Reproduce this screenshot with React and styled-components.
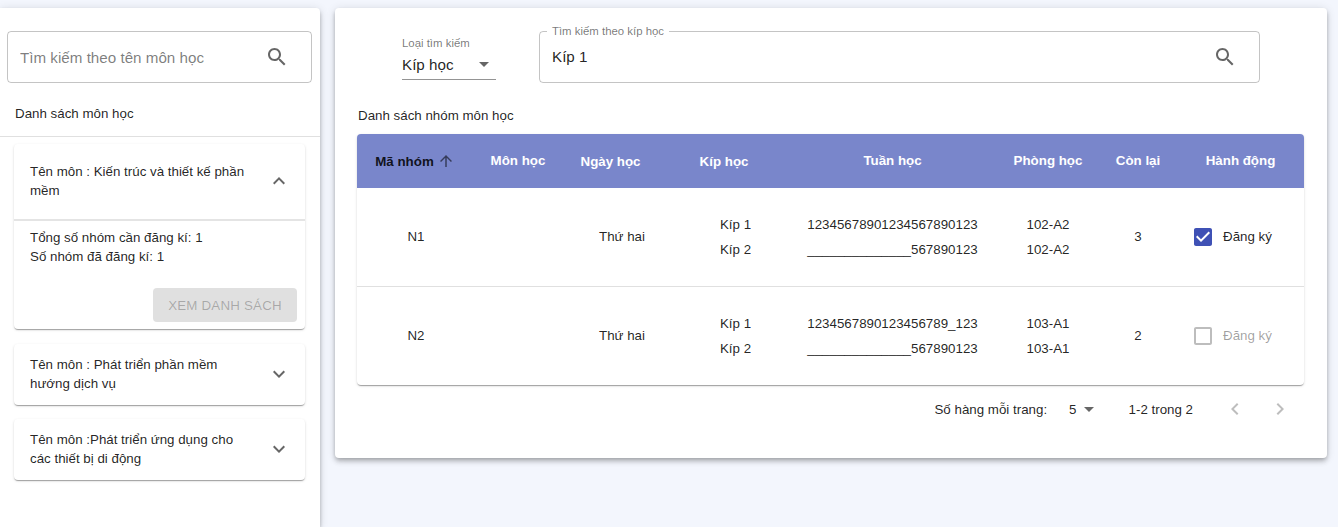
import React from "react";
import styled, { createGlobalStyle } from "styled-components";

const PATHS = {
  search: "M15.5 14h-.79l-.28-.27C15.41 12.59 16 11.11 16 9.5 16 5.91 13.09 3 9.5 3S3 5.91 3 9.5 5.91 16 9.5 16c1.61 0 3.09-.59 4.23-1.57l.27.28v.79l5 4.99L20.49 19l-4.99-5zm-6 0C7.01 14 5 11.99 5 9.5S7.01 5 9.5 5 14 7.01 14 9.5 11.99 14 9.5 14z",
  more: "M16.59 8.59L12 13.17 7.41 8.59 6 10l6 6 6-6z",
  less: "M12 8l-6 6 1.41 1.41L12 10.83l4.59 4.58L18 14z",
  up: "M4 12l1.41 1.41L11 7.83V20h2V7.83l5.58 5.59L20 12l-8-8-8 8z",
  drop: "M7 10l5 5 5-5z",
  checked: "M19 3H5c-1.11 0-2 .9-2 2v14c0 1.1.89 2 2 2h14c1.11 0 2-.9 2-2V5c0-1.1-.89-2-2-2zm-9 14l-5-5 1.41-1.41L10 14.17l7.59-7.59L19 8l-9 9z",
  blank: "M19 5v14H5V5h14m0-2H5c-1.1 0-2 .9-2 2v14c0 1.1.9 2 2 2h14c1.1 0 2-.9 2-2V5c0-1.1-.9-2-2-2z",
  left: "M15.41 7.41L14 6l-6 6 6 6 1.41-1.41L10.83 12z",
  right: "M10 6L8.59 7.41 13.17 12l-4.58 4.59L10 18l6-6z",
};

const FONT = `"Liberation Sans", Arial, sans-serif`;

const Global = createGlobalStyle`
  html, body { margin: 0; padding: 0; height: 100%; overflow: hidden; }
  body {
    background: #f3f6fd;
    font-family: ${FONT};
    font-size: 13.33px;
    color: rgba(0,0,0,.87);
  }
`;

const Svg = styled.svg`
  display: block;
  flex: none;
  width: ${(p) => p.$size || 24}px;
  height: ${(p) => p.$size || 24}px;
  fill: ${(p) => p.$color || "rgba(0,0,0,.6)"};
`;
const Icon = ({ name, size, color }) => (
  <Svg viewBox="0 0 24 24" $size={size} $color={color}><path d={PATHS[name]} /></Svg>
);

const Page = styled.div`
  display: flex;
  gap: 15px;
  height: 527px;
  padding-top: 8px;
  box-sizing: border-box;
`;
const Sidebar = styled.aside`
  width: 320px;
  flex: none;
  background: #fff;
  border-radius: 0 4px 0 0;
  box-shadow: 0 2px 4px -1px rgba(0,0,0,.2), 0 4px 5px 0 rgba(0,0,0,.14), 0 1px 10px 0 rgba(0,0,0,.12);
`;
const SearchBox = styled.div`
  display: flex;
  align-items: center;
  height: 52px;
  margin: 23px 8px 0 7px;
  padding: 0 22px 0 12px;
  border: 1px solid rgba(0,0,0,.23);
  border-radius: 4px;
  box-sizing: border-box;
`;
const SearchInput = styled.input`
  flex: 1;
  min-width: 0;
  border: 0;
  outline: 0;
  padding: 0;
  background: transparent;
  font: 15.2px ${FONT};
  color: rgba(0,0,0,.87);
  &::placeholder { color: rgba(0,0,0,.52); opacity: 1; }
`;
const SideTitle = styled.div`
  height: 54px;
  padding: 22px 0 0 15px;
  box-sizing: border-box;
  line-height: 17px;
  border-bottom: 1px solid #e0e0e0;
`;
const AccordionList = styled.div`
  display: flex;
  flex-direction: column;
  gap: 14px;
  padding: 7px 15px 0 14px;
`;
const Accordion = styled.section`
  background: #fff;
  border-radius: 4px;
  margin-bottom: ${(p) => (p.$open ? "1px" : "0")};
  box-shadow: 0 2px 1px -1px rgba(0,0,0,.2), 0 1px 1px 0 rgba(0,0,0,.14), 0 1px 3px 0 rgba(0,0,0,.12);
`;
const Summary = styled.div`
  display: flex;
  align-items: center;
  justify-content: space-between;
  padding: ${(p) => (p.$open ? "18px 14px 19px 16px" : "11px 14px 12px 16px")};
  border-bottom: ${(p) => (p.$open ? "2px solid #e4e4e4" : "0")};
`;
const SummaryText = styled.div`
  width: 222px;
  line-height: 19px;
`;
const Details = styled.div`
  padding: 7px 8px 7px 16px;
  line-height: 19px;
`;
const ButtonRow = styled.div`
  display: flex;
  justify-content: flex-end;
  margin-top: 22px;
`;
const DisabledButton = styled.button`
  width: 144px;
  height: 34px;
  padding: 0;
  border: 0;
  border-radius: 4px;
  background: #e0e0e0;
  color: rgba(0,0,0,.26);
  font: 400 13.33px ${FONT};
  letter-spacing: .2px;
  text-transform: uppercase;
`;

const Main = styled.main`
  width: 992px;
  height: 450px;
  flex: none;
  padding: 17px 23px 0 22px;
  box-sizing: border-box;
  background: #fff;
  border-radius: 4px;
  box-shadow: 0 2px 4px -1px rgba(0,0,0,.2), 0 4px 5px 0 rgba(0,0,0,.14), 0 1px 10px 0 rgba(0,0,0,.12);
`;
const FilterRow = styled.div`
  display: flex;
  align-items: flex-end;
  gap: 43px;
  padding: 0 44px 0 45px;
`;
const SelectField = styled.div`
  width: 94px;
  height: 55px;
  flex: none;
  box-sizing: border-box;
  padding-top: 12px;
  margin-bottom: 3px;
  border-bottom: 1px solid rgba(0,0,0,.42);
`;
const SmallLabel = styled.div`
  font-size: 11.4px;
  line-height: 13px;
  color: rgba(0,0,0,.54);
`;
const SelectValue = styled.div`
  display: flex;
  align-items: center;
  justify-content: space-between;
  height: 24px;
  margin-top: 2px;
  font-size: 15.2px;
`;
const OutlinedField = styled.fieldset`
  flex: 1;
  min-width: 0;
  height: 58px;
  margin: 0;
  padding: 0 22px 6px 12px;
  box-sizing: border-box;
  display: flex;
  align-items: center;
  border: 1px solid rgba(0,0,0,.23);
  border-radius: 4px;
`;
const FieldLegend = styled.legend`
  padding: 0 5px;
  margin-left: -5px;
  font-size: 11.4px;
  line-height: 12px;
  color: rgba(0,0,0,.54);
`;
const SectionTitle = styled.div`
  margin-top: 24px;
  margin-left: 1px;
  height: 27px;
  line-height: 17px;
`;
const TableCard = styled.div`
  border-radius: 4px;
  overflow: hidden;
  box-shadow: 0 2px 1px -1px rgba(0,0,0,.2), 0 1px 1px 0 rgba(0,0,0,.14), 0 1px 3px 0 rgba(0,0,0,.12);
`;
const Table = styled.table`
  width: 100%;
  table-layout: fixed;
  border-collapse: collapse;
`;
const HeadCell = styled.th`
  height: 54px;
  box-sizing: border-box;
  padding: 0 0 ${(p) => (p.$plain ? "2px" : "0")};
  background: #7986cb;
  color: #fff;
  font-weight: 700;
  text-align: center;
`;
const SortLabel = styled.span`
  display: inline-flex;
  align-items: center;
  gap: 3px;
  padding-right: 2px;
  vertical-align: middle;
  color: ${(p) => (p.$active ? "rgba(0,0,0,.87)" : "#fff")};
`;
const SortIcon = styled.span`
  display: block;
  opacity: ${(p) => (p.$active ? 1 : 0)};
`;
const Row = styled.tr`
  height: ${(p) => (p.$last ? "99px" : "98px")};
  border-bottom: ${(p) => (p.$last ? "0" : "1px solid #e0e0e0")};
`;
const Cell = styled.td`
  padding: 0;
  text-align: center;
`;
const Stack = styled.div`
  display: flex;
  flex-direction: column;
  gap: 8px;
  line-height: 17px;
`;
const ActionCell = styled.td`
  padding: 0 0 0 14px;
`;
const Action = styled.label`
  display: flex;
  align-items: center;
  gap: 8px;
  color: ${(p) => (p.$disabled ? "rgba(0,0,0,.38)" : "inherit")};
`;
const Pagination = styled.div`
  display: flex;
  align-items: center;
  height: 48px;
  padding-right: 12px;
  justify-content: flex-end;
`;
const PageSize = styled.div`
  display: flex;
  align-items: center;
  margin: 0 28px 0 22px;
`;
const PageRange = styled.span`
  margin-right: 30px;
`;
const PageButtons = styled.div`
  display: flex;
  gap: 21px;
`;

const groups = [
  { id: "N1", kip: ["Kíp 1", "Kíp 2"], weeks: ["12345678901234567890123", "______________567890123"], rooms: ["102-A2", "102-A2"], left: 3, on: true },
  { id: "N2", kip: ["Kíp 1", "Kíp 2"], weeks: ["1234567890123456789_123", "______________567890123"], rooms: ["103-A1", "103-A1"], left: 2, on: false },
];
const widths = [118, 86, 122, 105, 209, 102, 78, 127];

const Lines = ({ items }) => (
  <Stack>{items.map((t, i) => <span key={i}>{t}</span>)}</Stack>
);
const Sort = ({ label, active }) => (
  <SortLabel $active={active}>
    {label}
    <SortIcon $active={active}><Icon name="up" size={18} color="rgba(0,0,0,.55)" /></SortIcon>
  </SortLabel>
);

export default function App() {
  return (
    <Page>
      <Global />
      <Sidebar>
        <SearchBox>
          <SearchInput placeholder="Tìm kiếm theo tên môn học" readOnly />
          <Icon name="search" />
        </SearchBox>
        <SideTitle>Danh sách môn học</SideTitle>
        <AccordionList>
          <Accordion $open>
            <Summary $open>
              <SummaryText>Tên môn : Kiến trúc và thiết kế phần mềm</SummaryText>
              <Icon name="less" />
            </Summary>
            <Details>
              <div>Tổng số nhóm cần đăng kí: 1</div>
              <div>Số nhóm đã đăng kí: 1</div>
              <ButtonRow><DisabledButton disabled>Xem danh sách</DisabledButton></ButtonRow>
            </Details>
          </Accordion>
          <Accordion>
            <Summary>
              <SummaryText>Tên môn : Phát triển phần mềm hướng dịch vụ</SummaryText>
              <Icon name="more" />
            </Summary>
          </Accordion>
          <Accordion>
            <Summary>
              <SummaryText>Tên môn :Phát triển ứng dụng cho các thiết bị di động</SummaryText>
              <Icon name="more" />
            </Summary>
          </Accordion>
        </AccordionList>
      </Sidebar>
      <Main>
        <FilterRow>
          <SelectField>
            <SmallLabel>Loại tìm kiếm</SmallLabel>
            <SelectValue>Kíp học<Icon name="drop" /></SelectValue>
          </SelectField>
          <OutlinedField>
            <FieldLegend>Tìm kiếm theo kíp học</FieldLegend>
            <SearchInput defaultValue="Kíp 1" readOnly />
            <Icon name="search" />
          </OutlinedField>
        </FilterRow>
        <SectionTitle>Danh sách nhóm môn học</SectionTitle>
        <TableCard>
          <Table>
            <colgroup>{widths.map((w, i) => <col key={i} width={w} />)}</colgroup>
            <thead>
              <tr>
                <HeadCell><Sort label="Mã nhóm" active /></HeadCell>
                <HeadCell $plain>Môn học</HeadCell>
                <HeadCell><Sort label="Ngày học" /></HeadCell>
                <HeadCell><Sort label="Kíp học" /></HeadCell>
                <HeadCell $plain>Tuần học</HeadCell>
                <HeadCell $plain>Phòng học</HeadCell>
                <HeadCell $plain>Còn lại</HeadCell>
                <HeadCell $plain>Hành động</HeadCell>
              </tr>
            </thead>
            <tbody>
              {groups.map((g, i) => (
                <Row key={g.id} $last={i === groups.length - 1}>
                  <Cell>{g.id}</Cell>
                  <Cell />
                  <Cell>Thứ hai</Cell>
                  <Cell><Lines items={g.kip} /></Cell>
                  <Cell><Lines items={g.weeks} /></Cell>
                  <Cell><Lines items={g.rooms} /></Cell>
                  <Cell>{g.left}</Cell>
                  <ActionCell>
                    <Action $disabled={!g.on}>
                      <Icon name={g.on ? "checked" : "blank"} color={g.on ? "#3f51b5" : "rgba(0,0,0,.26)"} />
                      Đăng ký
                    </Action>
                  </ActionCell>
                </Row>
              ))}
            </tbody>
          </Table>
        </TableCard>
        <Pagination>
          <span>Số hàng mỗi trang:</span>
          <PageSize>5<Icon name="drop" /></PageSize>
          <PageRange>1-2 trong 2</PageRange>
          <PageButtons>
            <Icon name="left" color="rgba(0,0,0,.26)" />
            <Icon name="right" color="rgba(0,0,0,.26)" />
          </PageButtons>
        </Pagination>
      </Main>
    </Page>
  );
}
